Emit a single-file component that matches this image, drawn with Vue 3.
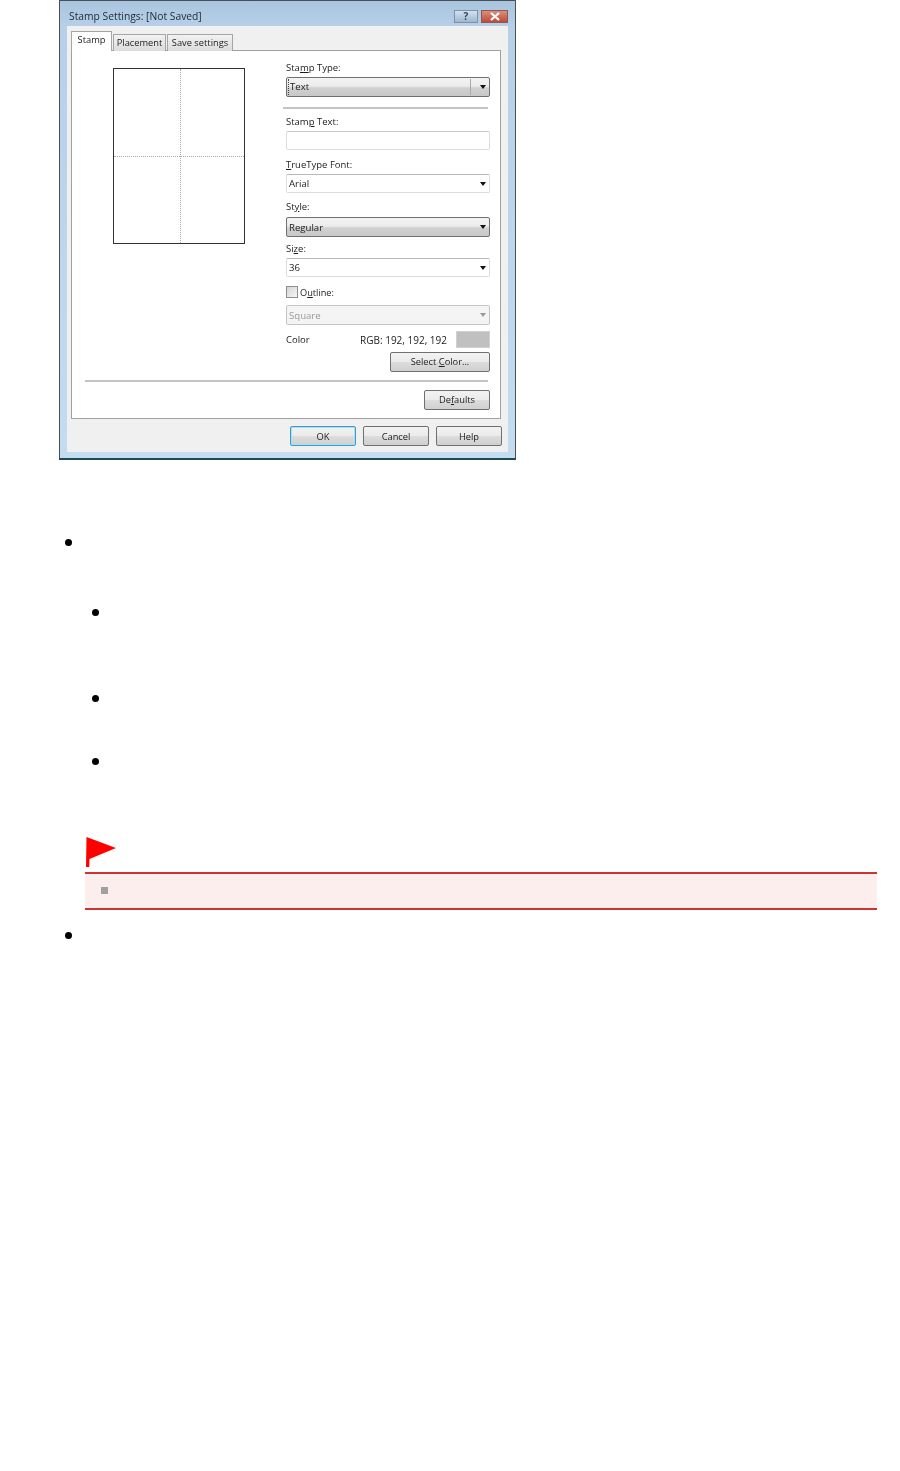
<template>
  <div class="page">
    <div class="dialog">
      <div class="titlebar">
        <span class="title">Stamp Settings: [Not Saved]</span>
        <div class="win-btns">
          <span class="win-help">?</span>
          <span class="win-close">
            <svg width="12" height="9" viewBox="0 0 12 9"><path d="M2 1l8 7M10 1L2 8" stroke="#fff" stroke-width="2.2" fill="none" /></svg>
          </span>
        </div>
      </div>

      <div class="client">
        <div class="tabs">
          <div v-for="(tab, i) in tabs" :key="tab.name" :class="['tab', { active: i === 0 }]" :style="{ width: tab.width + 'px' }">{{ tab.name }}</div>
        </div>

        <div class="panel">
          <div class="panel-top">
            <div class="preview">
              <div class="preview-v"></div>
              <div class="preview-h"></div>
            </div>

            <div class="form">
              <label class="lbl lbl-first">Sta<u>m</u>p Type:</label>
              <div class="combo raised first-combo">
                <span class="combo-inner">Text</span>
                <span class="arrow-box"><i class="arrow"></i></span>
              </div>
              <div class="sep sep-form"></div>
              <label class="lbl">Stam<u>p</u> Text:</label>
              <div class="textbox"></div>
              <label class="lbl lbl-font"><u>T</u>rueType Font:</label>
              <div class="combo flat"><span>Arial</span><i class="arrow"></i></div>
              <label class="lbl lbl-style">St<u>y</u>le:</label>
              <div class="combo raised"><span>Regular</span><i class="arrow"></i></div>
              <label class="lbl lbl-size">Si<u>z</u>e:</label>
              <div class="combo flat"><span>36</span><i class="arrow"></i></div>
              <div class="check-row">
                <span class="checkbox"></span>
                <span>O<u>u</u>tline:</span>
              </div>
              <div class="combo flat disabled"><span>Square</span><i class="arrow"></i></div>
              <div class="color-row">
                <span>Color</span>
                <span class="rgb">RGB: 192, 192, 192</span>
                <span class="swatch"></span>
              </div>
              <div class="btn-line">
                <button class="btn btn-color">Select <u>C</u>olor...</button>
              </div>
            </div>
          </div>
          <div class="sep sep-panel"></div>
          <div class="btn-line defaults-line">
            <button class="btn btn-std">De<u>f</u>aults</button>
          </div>
        </div>

        <div class="footer">
          <button class="btn btn-std default">OK</button>
          <button class="btn btn-std">Cancel</button>
          <button class="btn btn-std">Help</button>
        </div>
      </div>
    </div>

    <div class="notes">
      <div class="dot d1"></div>
      <div class="dot nested d2"></div>
      <div class="dot nested d3"></div>
      <div class="dot nested d4"></div>
      <svg class="flag" width="31" height="30" viewBox="0 0 31 30">
        <path d="M0.5 0L30 11 3.5 22 3.2 30 0 30Z" fill="#f00" />
      </svg>
      <div class="important">
        <span class="square"></span>
      </div>
      <div class="dot d5"></div>
    </div>
  </div>
</template>

<script setup>
  const tabs = [
    { name: 'Stamp', width: 41 },
    { name: 'Placement', width: 53 },
    { name: 'Save settings', width: 66 }
  ]
</script>

<style scoped>
  .page {
    width: 900px;
    height: 1471px;
    background: #fff;
    overflow: hidden;
    font-family: "Open Sans", "Noto Sans", sans-serif;
  }

  /* Dialog */
  .dialog {
    width: 457px;
    height: 460px;
    margin-left: 59px;
    box-sizing: border-box;
    border: 1px solid #4a4f52;
    border-bottom: 2px solid #1f4a50;
    background: linear-gradient(180deg, #a9c4de 0, #b7d0e8 25px, #c4dcf0 100%);
    padding: 0 7px 6px;
    display: flex;
    flex-direction: column;
    font-size: 9.5px;
    color: #1c1c1c;
    filter: blur(0.5px);
  }

  .titlebar {
    height: 25px;
    flex: none;
    display: flex;
    justify-content: space-between;
    padding-left: 2px;
    padding-top: 8px;
    box-sizing: border-box;
  }

  .title {
    font-size: 10.3px;
    line-height: 15px;
    color: #1c2a35;
  }

  .win-btns {
    display: flex;
    gap: 3px;
    height: 13px;
    margin-top: 1px;
  }

  .win-help {
    width: 24px;
    height: 13px;
    background: linear-gradient(180deg, #d3e2f0, #9fb7cd);
    border: 1px solid #7e93a6;
    box-sizing: border-box;
    text-align: center;
    font-size: 10px;
    line-height: 11px;
    font-weight: 700;
    color: #33475a;
  }

  .win-close {
    width: 27px;
    height: 13px;
    background: linear-gradient(180deg, #dc8f7d, #bd4b39);
    border: 1px solid #8c5a50;
    box-sizing: border-box;
    display: flex;
    align-items: center;
    justify-content: center;
  }

  .client {
    flex: 1;
    background: #f0f0f0;
    padding: 6px 0 0 4px;
    display: flex;
    flex-direction: column;
  }

  /* Tabs */
  .tabs {
    display: flex;
    height: 19px;
    align-items: flex-end;
    gap: 1px;
    margin-bottom: -1px;
    position: relative;
    z-index: 1;
  }

  .tab {
    height: 17px;
    box-sizing: border-box;
    border: 1px solid #a5a5a5;
    border-bottom: none;
    background: linear-gradient(180deg, #f2f2f2, #dcdcdc);
    font-size: 9.3px;
    text-align: center;
    line-height: 15px;
    white-space: nowrap;
  }

  .tab.active {
    height: 20px;
    background: #fff;
    line-height: 16px;
  }

  .panel {
    width: 430px;
    height: 369px;
    box-sizing: border-box;
    background: #fff;
    border: 1px solid #a0a0a0;
    padding-top: 17px;
  }

  .panel-top {
    display: flex;
    height: 312px;
  }

  .preview {
    position: relative;
    width: 132px;
    height: 176px;
    margin-left: 41px;
    box-sizing: border-box;
    border: 1px solid #333;
    background: #fff;
  }

  .preview-v {
    position: absolute;
    left: 66px;
    top: 0;
    bottom: 0;
    border-left: 1px dotted #aaa;
  }

  .preview-h {
    position: absolute;
    top: 87px;
    left: 0;
    right: 0;
    border-top: 1px dotted #aaa;
  }

  /* Form column */
  .form {
    width: 204px;
    margin-left: 41px;
    display: flex;
    flex-direction: column;
  }

  .form > * {
    flex: none;
  }

  .lbl {
    display: block;
    height: 14px;
    line-height: 14px;
    white-space: nowrap;
  }

  .lbl-first { margin-top: -7px; }
  .lbl-font { margin-top: 8px; }
  .lbl-style { margin-top: 7px; }
  .lbl-size { margin-top: 5px; }

  .combo {
    height: 20px;
    box-sizing: border-box;
    display: flex;
    align-items: center;
    justify-content: space-between;
    padding: 0 2px;
    border-radius: 2px;
    margin-top: 3px;
    font-size: 9.6px;
  }

  .first-combo {
    margin-top: 2px;
  }

  .combo.raised {
    border: 1px solid #6f6f6f;
    background: linear-gradient(180deg, #f3f3f3 0, #ececec 45%, #d0d0d0 55%, #c8c8c8 100%);
  }

  .combo.flat {
    height: 19px;
    border: 1px solid #dcdcdc;
    border-top-color: #b9b9b9;
    background: #fff;
    margin-top: 2px;
  }

  .combo.flat.disabled {
    height: 20px;
    background: #f4f4f4;
    color: #9a9a9a;
    border-color: #c4c4c4;
    margin-top: 6px;
  }

  .combo.disabled .arrow {
    border-top-color: #9a9a9a;
  }

  .combo-inner {
    flex: 1;
    height: 16px;
    line-height: 15px;
    box-sizing: border-box;
    border-right: 1px solid #a9a9a9;
    border-left: 1px dotted #444;
    margin-left: -1px;
    padding-left: 1px;
  }

  .arrow-box {
    width: 16px;
    display: flex;
    justify-content: flex-end;
  }

  .arrow {
    width: 0;
    height: 0;
    border-left: 3px solid transparent;
    border-right: 3px solid transparent;
    border-top: 4px solid #111;
    margin-right: 1px;
  }

  .sep {
    height: 2px;
    background: #c4c4c4;
  }

  .sep-form {
    width: 205px;
    margin: 10px 0 6px -3px;
  }

  .sep-panel {
    width: 403px;
    margin-left: 13px;
  }

  .textbox {
    height: 19px;
    margin-top: 2px;
    box-sizing: border-box;
    border: 1px solid #dcdcdc;
    border-top-color: #c8c8c8;
    border-radius: 2px;
    background: #fff;
  }

  .check-row {
    display: flex;
    align-items: center;
    gap: 2px;
    height: 14px;
    margin-top: 8px;
    font-size: 9.2px;
  }

  .checkbox {
    width: 12px;
    height: 12px;
    box-sizing: border-box;
    border: 1px solid #8e8e8e;
    background: linear-gradient(135deg, #d4d4d4, #f6f6f6);
  }

  .color-row {
    display: flex;
    align-items: center;
    height: 17px;
    margin-top: 6px;
  }

  .rgb {
    font-size: 10px;
    margin-left: auto;
    margin-right: 9px;
  }

  .swatch {
    width: 34px;
    height: 17px;
    background: #c0c0c0;
    border: 1px solid #d0d0d0;
    box-sizing: border-box;
  }

  .btn-line {
    display: flex;
    justify-content: flex-end;
    margin-top: 4px;
  }

  .btn {
    height: 20px;
    box-sizing: border-box;
    padding: 0;
    border: 1px solid #707070;
    border-radius: 2px;
    background: linear-gradient(180deg, #f2f2f2 0, #ebebeb 48%, #dcdcdc 52%, #cfcfcf 100%);
    font-family: inherit;
    font-size: 9.3px;
    color: #1c1c1c;
    line-height: 16px;
  }

  .btn-color { width: 100px; }
  .btn-std { width: 66px; }

  .defaults-line {
    width: 404px;
    margin-left: 14px;
    margin-top: 8px;
  }

  .footer {
    display: flex;
    justify-content: flex-end;
    gap: 7px;
    margin-top: 7px;
    width: 431px;
  }

  .footer .btn {
    padding-top: 2px;
  }

  .btn.default {
    border-color: #3c9cc4;
    box-shadow: inset 0 0 0 1px #a6e0f4;
  }

  /* Lower part */
  .notes {
    display: flex;
    flex-direction: column;
    align-items: flex-start;
    padding-left: 65px;
  }

  .dot {
    width: 7px;
    height: 7px;
    border-radius: 50%;
    background: #000;
  }

  .dot.nested { margin-left: 27px; }
  .d1 { margin-top: 79px; }
  .d2 { margin-top: 63px; }
  .d3 { margin-top: 79px; }
  .d4 { margin-top: 56px; }

  .flag {
    margin: 72px 0 0 21px;
    flex: none;
  }

  .important {
    width: 792px;
    height: 38px;
    margin: 5px 0 0 20px;
    box-sizing: border-box;
    border-top: 2px solid #cc3333;
    border-bottom: 2px solid #cc3333;
    background: #fdeeee;
    padding: 13px 0 0 16px;
  }

  .square {
    display: block;
    width: 7px;
    height: 7px;
    background: #a0a0a0;
  }

  .d5 { margin-top: 22px; }
</style>
